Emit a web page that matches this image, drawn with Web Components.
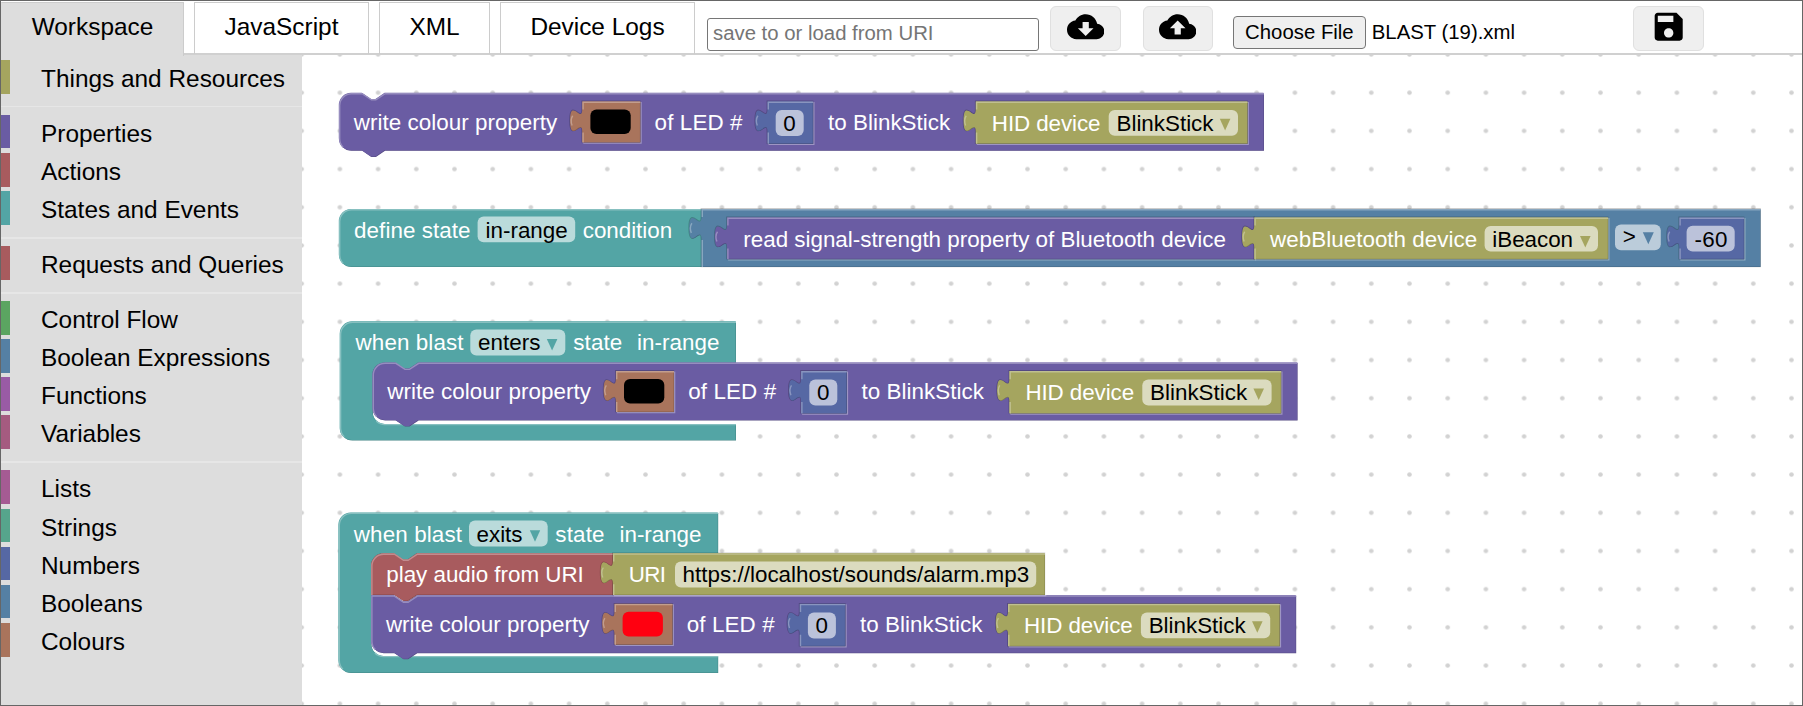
<!DOCTYPE html>
<html lang="en">
<head>
<meta charset="utf-8">
<title>BLAST</title>
<style>
html, body { margin: 0; height: 100%; overflow: hidden; }
body { font-family: "Liberation Sans", Arial, sans-serif; color: #000; background: #fff; }
</style>
</head>
<body>
<blast-app>
  <blast-tab slot="bar" style="--w:183px" active>Workspace</blast-tab>
  <blast-tab slot="bar" style="--w:175px">JavaScript</blast-tab>
  <blast-tab slot="bar" style="--w:111px">XML</blast-tab>
  <blast-tab slot="bar" style="--w:195px">Device Logs</blast-tab>
  <uri-input slot="bar" placeholder="save to or load from URI"></uri-input>
  <icon-button slot="bar" icon="download"></icon-button>
  <icon-button slot="bar" icon="upload" style="margin-left:22px"></icon-button>
  <file-picker slot="bar">BLAST (19).xml</file-picker>
  <icon-button slot="bar" icon="save" style="margin-left:118px"></icon-button>

  <toolbox-category slot="toolbox" color="#a5a55f">Things and Resources</toolbox-category>
  <toolbox-separator slot="toolbox"></toolbox-separator>
  <toolbox-category slot="toolbox" color="#6a5ca3">Properties</toolbox-category>
  <toolbox-category slot="toolbox" color="#a85b5e">Actions</toolbox-category>
  <toolbox-category slot="toolbox" color="#53a5a5">States and Events</toolbox-category>
  <toolbox-separator slot="toolbox"></toolbox-separator>
  <toolbox-category slot="toolbox" color="#a85b5e">Requests and Queries</toolbox-category>
  <toolbox-separator slot="toolbox"></toolbox-separator>
  <toolbox-category slot="toolbox" color="#5ba561">Control Flow</toolbox-category>
  <toolbox-category slot="toolbox" color="#5580a4">Boolean Expressions</toolbox-category>
  <toolbox-category slot="toolbox" color="#995ba5">Functions</toolbox-category>
  <toolbox-category slot="toolbox" color="#a55b80">Variables</toolbox-category>
  <toolbox-separator slot="toolbox"></toolbox-separator>
  <toolbox-category slot="toolbox" color="#a55b93">Lists</toolbox-category>
  <toolbox-category slot="toolbox" color="#56a58c">Strings</toolbox-category>
  <toolbox-category slot="toolbox" color="#5668a4">Numbers</toolbox-category>
  <toolbox-category slot="toolbox" color="#5580a4">Booleans</toolbox-category>
  <toolbox-category slot="toolbox" color="#a9745c">Colours</toolbox-category>

  <block-canvas slot="workspace">
    <block-stack name="write"></block-stack>
    <block-stack name="define"></block-stack>
    <block-stack name="enters"></block-stack>
    <block-stack name="exits"></block-stack>
  </block-canvas>
</blast-app>

<script>
const define = (name, html, setup) => customElements.define(name, class extends HTMLElement {
  constructor() {
    super();
    this.attachShadow({ mode: 'open' }).innerHTML = html;
  }
  connectedCallback() { if (setup) setup(this, this.shadowRoot); }
});

define('blast-app', `
<style>
:host { display: flex; flex-direction: column; box-sizing: border-box; width: 1803px; height: 706px; border: 1px solid #666; overflow: hidden; background: #fff; }
header { display: flex; flex: none; height: 54px; box-sizing: border-box; border-bottom: 2px solid #d0d0d0; padding-top: 1px; position: relative; }
main { flex: 1; display: flex; min-height: 0; }
nav { width: 301px; flex: none; background: #ddd; padding-top: 5px; box-sizing: border-box; }
section { flex: 1; min-width: 0; display: flex; }
</style>
<header><slot name="bar"></slot></header>
<main><nav><slot name="toolbox"></slot></nav><section><slot name="workspace"></slot></section></main>`);

define('blast-tab', `
<style>
:host { display: block; box-sizing: border-box; width: var(--w); height: 52px; flex: none; border: 1px solid #ccc; border-width: 1.4px 1.4px 0; margin-right: 10px; text-align: center; font-size: 24.4px; line-height: 48px; white-space: nowrap; }
:host([active]) { background: #ddd; border-left-color: #ddd; height: 54px; }
</style><slot></slot>`);

define('uri-input', `
<style>
:host { display: block; margin: 16px 11px 0 2px; flex: none; }
input { display: block; box-sizing: border-box; width: 332px; height: 33px; border: 1.5px solid #767676; border-radius: 3px; padding: 0 0 2px 5px; font: 20.35px "Liberation Sans", Arial, sans-serif; outline: none; background: #fff; }
input::placeholder { color: #757575; opacity: 1; }
</style><input type="text">`,
(el, root) => { root.querySelector('input').placeholder = el.getAttribute('placeholder'); });

const CLOUD = 'M19.35 10.04C18.67 6.59 15.64 4 12 4 9.11 4 6.6 5.64 5.35 8.04 2.34 8.36 0 10.91 0 14c0 3.31 2.69 6 6 6h13c2.76 0 5-2.24 5-5 0-2.64-2.05-4.78-4.65-4.96z';
const ICONS = {
  download: CLOUD + 'M17 13l-5 5-5-5h3V9h4v4h3z',
  upload: CLOUD + 'M14 13v4h-4v-4H7l5-5 5 5h-3z',
  save: 'M17 3H5c-1.11 0-2 .9-2 2v14c0 1.1.89 2 2 2h14c1.1 0 2-.9 2-2V7l-4-4zm-5 16c-1.66 0-3-1.34-3-3s1.34-3 3-3 3 1.34 3 3-1.34 3-3 3zm3-10H5V5h10v4z'
};
define('icon-button', `
<style>
:host { display: block; margin-top: 4px; flex: none; }
button { display: flex; align-items: center; justify-content: center; box-sizing: border-box; width: 70.5px; height: 45px; padding: 0; background: #efefef; border: 1.5px solid #e0e0e0; border-radius: 6px; }
svg { display: block; width: 37.4px; height: 37.4px; margin-top: -3px; }
</style><button><svg viewBox="0 0 24 24"><path fill="#000" fill-rule="evenodd"/></svg></button>`,
(el, root) => { root.querySelector('path').setAttribute('d', ICONS[el.getAttribute('icon')]); });

define('file-picker', `
<style>
:host { display: flex; align-items: center; height: 33px; margin: 14px 0 0 20px; flex: none; width: 282px; font-size: 20.35px; white-space: nowrap; }
button { box-sizing: border-box; width: 133px; height: 33px; margin: 0 6px 0 0; padding: 0 0 1px; border: 1.5px solid #767676; border-radius: 4px; background: #efefef; color: #000; font: inherit; }
span { padding-bottom: 1px; }
</style><button>Choose File</button><span><slot></slot></span>`);

define('toolbox-category', `
<style>
:host { display: block; height: 33.6px; margin-bottom: 4.58px; border-left: 9.8px solid var(--c); padding-left: 31px; font-size: 24.4px; line-height: 37px; white-space: nowrap; }
</style><slot></slot>`,
(el) => { el.style.setProperty('--c', el.getAttribute('color')); });

define('toolbox-separator', `
<style>
:host { display: block; height: 1.5px; padding: 0; margin: 12.4px 0 7.4px; background: #e6e6e6; }
</style>`);

define('block-canvas', `
<style>
:host { display: block; position: relative; flex: 1; overflow: hidden; }
.grid { display: block; width: 100%; height: 100%; }
</style>
<svg class="grid">
  <defs><pattern id="dots" patternUnits="userSpaceOnUse" x="18.8" y="18.6" width="38.2" height="38.19"><circle cx="19.1" cy="19.1" r="2.3" fill="#d2d2d2"/></pattern></defs>
  <rect width="100%" height="100%" fill="url(#dots)"/>
</svg><slot></slot>`);

/* Block renderer. Sizes are in canvas pixels; U is one block unit. */
const U = 1.527;
const C = { purple: '#6a5ca3', teal: '#53a5a5', blue: '#5580a4', num: '#5668a4', olive: '#a5a55f', colour: '#a9745c', red: '#a85b5e' };
const mix = (hex, to, k) => '#' + [1, 3, 5].map(i => Math.round(parseInt(hex.substr(i, 2), 16) * (1 - k) + to * k).toString(16).padStart(2, '0')).join('');
const esc = s => s.replace(/&/g, '&amp;').replace(/</g, '&lt;').replace(/>/g, '&gt;');
const u = n => (n * U).toFixed(2);

const paint = (d, light, c) =>
  `<path d="${d}" fill="${mix(c, 0, .2)}"/>` +
  `<path d="${d}" fill="${c}" transform="translate(-.5 -.5)"/>` +
  `<path d="${light}" fill="none" stroke="${mix(c, 255, .3)}" stroke-width="1.4"/>`;

const NOTCH = `l ${u(6)},${u(4)} h ${u(3)} l ${u(6)},${u(-4)}`;
const NOTCH_BACK = `l ${u(-6)},${u(4)} h ${u(-3)} l ${u(-6)},${u(-4)}`;
const TAB_UP = `c 0,${u(-10)} ${u(-8)},${u(8)} ${u(-8)},${u(-7.5)} s ${u(8)},${u(2.5)} ${u(8)},${u(-7.5)}`;

/* statement block: f.prev top notch, f.next bottom notch, f.sq square top-left, f.sqb square bottom-left */
function stmt(x, y, x2, y2, c, f = {}) {
  const r = 8 * U;
  const start = f.sqb ? `M ${x},${y2}` : `M ${x + r},${y2} a ${r},${r} 0 0 1 ${-r},${-r}`;
  const top = f.sq ? `V ${y}` : `V ${y + r} a ${r},${r} 0 0 1 ${r},${-r}`;
  const d = `${start} ${top} ${f.prev ? `H ${x + 15 * U} ${NOTCH}` : ''} H ${x2} V ${y2} ${f.next ? `H ${x + 30 * U} ${NOTCH_BACK}` : ''} Z`;
  const h = .4;
  const light = (f.sqb ? `M ${x + h},${y2}` : `M ${x + h + 3.4},${y2 - 3.6} a ${r},${r} 0 0 1 -3.4,${-r + 3.6}`) +
    (f.sq ? `V ${y + h}` : `V ${y + r} a ${r - h},${r - h} 0 0 1 ${r - h},${-r + h}`) +
    `${f.prev ? `H ${x + 15 * U} ${NOTCH}` : ''} H ${x2}`;
  return paint(d, light, c);
}
function value(x, y, x2, y2, c) {
  const d = `M ${x},${y} H ${x2} V ${y2} H ${x} V ${y + 20 * U} ${TAB_UP} Z`;
  const light = `M ${x + .3},${y2} V ${y + 20 * U} M ${x - 7 * U},${y + 15.5 * U} q -2.2,-6 .6,-9.8 M ${x + .3},${y + 5 * U} V ${y + .3} H ${x2}`;
  return `<path d="M ${x + .5},${y2 + .6} H ${x2 + .6} V ${y}" fill="none" stroke="#fff" stroke-opacity=".35" stroke-width="1.4"/>` +
    `<path d="${d}" fill="none" stroke="#000" stroke-opacity=".2" stroke-width="1.6" transform="translate(-.6 -.6)"/>` + paint(d, light, c);
}
/* C-shaped block: yi/ya inner mouth, xi inner left edge */
function cshape(x, y, x2, y2, xi, yi, ya, c) {
  const r = 8 * U;
  const d = `M ${x + r},${y2} a ${r},${r} 0 0 1 ${-r},${-r} V ${y + r} a ${r},${r} 0 0 1 ${r},${-r} H ${x2} V ${yi} H ${xi + 30 * U} ${NOTCH_BACK} H ${xi + r} a ${r},${r} 0 0 0 ${-r},${r} V ${ya - r} a ${r},${r} 0 0 0 ${r},${r} H ${x2} V ${y2} Z`;
  const light = `M ${x + 4},${y2 - 3.8} a ${r},${r} 0 0 1 -3.6,${-r + 3.8} V ${y + r} a ${r},${r} 0 0 1 ${r},${-r + .4} H ${x2} M ${xi + 3.4},${ya - 3.4} a ${r},${r} 0 0 0 ${r - 3.4},3.6 H ${x2}`;
  return paint(d, light, c);
}
const text = (x, x2, y, s, fill = '#fff') =>
  `<text x="${x - .7}" y="${y}" textLength="${(x2 - x + 1.2).toFixed(1)}" fill="${fill}">${esc(s)}</text>`;
const plate = (x, y, x2, y2) => `<rect x="${x}" y="${y}" width="${x2 - x}" height="${y2 - y}" rx="6" fill="#fff" fill-opacity=".6"/>`;
const swatch = (x, y, x2, y2, c) => `<rect x="${x}" y="${y}" width="${x2 - x}" height="${y2 - y}" rx="6" fill="${c}"/>`;
const arrow = (x, y, x2, y2, c) => `<path d="M ${x},${y} H ${x2} L ${(x + x2) / 2},${y2} Z" fill="${c}"/>`;

const writeColour = (dx, dy, colour, sq) => `<g transform="translate(${dx} ${dy})">` +
  stmt(339.3, 93.3, 1264, 150.8, C.purple, { prev: true, next: true, sq }) +
  text(354.4, 556.8, 129.6, 'write colour property') +
  value(582.8, 101.9, 640.4, 142.4, C.colour) + swatch(590.4, 109.4, 630.7, 134, colour) +
  text(655.3, 742, 129.6, 'of LED #') +
  value(768, 101.9, 813.2, 143.8, C.num) + plate(775.7, 110, 803.7, 136) + text(784, 795.3, 130.6, '0', '#000') +
  text(828.6, 949.8, 129.6, 'to BlinkStick') +
  value(976.3, 101.9, 1247.6, 143.8, C.olive) + text(992.5, 1100, 130.8, 'HID device') +
  plate(1108.7, 110, 1238, 135.8) + text(1117.2, 1213, 130.8, 'BlinkStick', '#000') +
  arrow(1219.8, 118.8, 1230.4, 130.4, C.olive) + '</g>';

const STACKS = {
  write: { box: [330, 85, 945, 80], draw: () => writeColour(0, 0, '#000') },
  define: { box: [330, 200, 1440, 76], draw: () =>
    stmt(339.3, 209.4, 702, 267, C.teal) +
    text(354.8, 470, 237.6, 'define state') + plate(477.6, 216.5, 575.2, 242.3) +
    text(486.3, 567.2, 237.6, 'in-range', '#000') + text(583.5, 671.6, 237.6, 'condition') +
    value(702, 209.4, 1760.6, 267, C.blue) +
    value(727.6, 217.9, 1254.8, 259.3, C.purple) +
    text(744, 1225.4, 247, 'read signal-strength property of Bluetooth device') +
    value(1254.8, 217.9, 1608.2, 259.3, C.olive) +
    text(1270.8, 1476.7, 247, 'webBluetooth device') + plate(1484.6, 226, 1598, 251.5) +
    text(1493, 1572.5, 247, 'iBeacon', '#000') + arrow(1580, 236, 1590.6, 247.5, C.olive) +
    plate(1615, 224.4, 1660.8, 250.2) + text(1623.4, 1634.8, 244.2, '>', '#000') +
    arrow(1642.8, 232.2, 1653.8, 244.3, C.blue) +
    value(1679.8, 217.9, 1744.2, 259.3, C.num) + plate(1686.6, 225.8, 1734.7, 251.4) +
    text(1695.2, 1727, 247.2, '-60', '#000') },
  enters: { box: [330, 312, 980, 140], draw: () =>
    cshape(340.2, 321.8, 736, 440.6, 372.9, 363, 424.4, C.teal) +
    text(356.3, 463, 350.3, 'when blast') + plate(470.3, 329.4, 565.3, 355.6) +
    text(478.8, 540, 350.3, 'enters', '#000') + arrow(546.8, 339, 557.4, 350.4, C.teal) +
    text(574, 621.8, 350.3, 'state') + text(637.8, 719, 350.3, 'in-range') +
    writeColour(33.6, 269.6, '#000') },
  exits: { box: [330, 504, 980, 180], draw: () =>
    cshape(338.9, 513, 718.2, 673, 371.5, 553.6, 656.4, C.teal) +
    text(354.5, 461.5, 542, 'when blast') + plate(469, 520.4, 547.7, 546.4) +
    text(477.3, 522, 542, 'exits', '#000') + arrow(529.8, 530.3, 540.2, 541.8, C.teal) +
    text(556, 604, 542, 'state') + text(620.2, 701, 542, 'in-range') +
    writeColour(32.2, 502.4, '#ff0010', true) +
    stmt(371.5, 553.8, 613.4, 595, C.red, { prev: true, next: true, sqb: true }) +
    text(387, 583.3, 582, 'play audio from URI') +
    value(613.4, 553.8, 1045, 595, C.olive) +
    text(629.5, 665.6, 582, 'URI') + plate(675, 561.6, 1036.2, 587.6) +
    text(683.3, 1028.6, 582, 'https://localhost/sounds/alarm.mp3', '#000') }
};

/* Offset of the canvas inside the window, so stacks can keep window coordinates. */
const ORIGIN = { x: 302, y: 55 };
define('block-stack', `
<style>
:host { display: block; position: absolute; }
svg { display: block; font: 22.4px "Liberation Sans", Arial, sans-serif; }
</style><div></div>`,
(el, root) => {
  const s = STACKS[el.getAttribute('name')], [x, y, w, h] = s.box;
  el.style.left = x - ORIGIN.x + 'px';
  el.style.top = y - ORIGIN.y + 'px';
  root.querySelector('div').innerHTML = `<svg width="${w}" height="${h}" viewBox="${x} ${y} ${w} ${h}">${s.draw()}</svg>`;
});
</script>
</body>
</html>
